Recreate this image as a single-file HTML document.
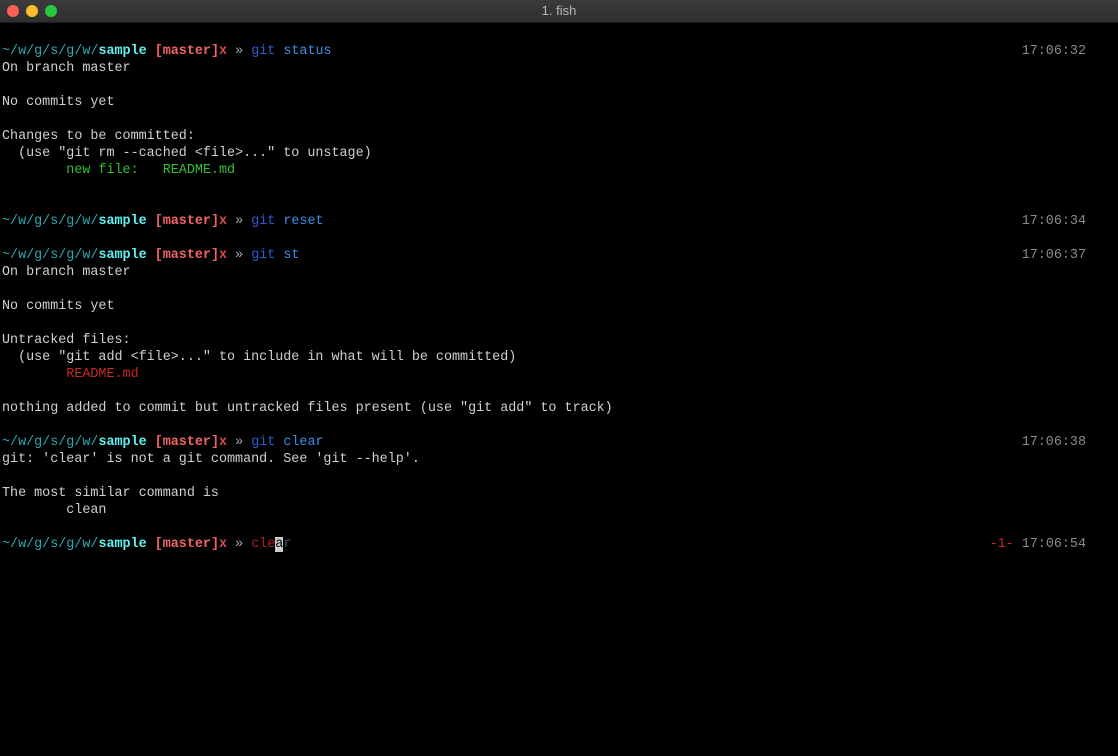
<!DOCTYPE html><html><head><style>
body{margin:0;width:1118px;height:756px;background:#000;overflow:hidden;font-family:"Liberation Mono",monospace;}
.tb{height:22px;background:linear-gradient(#3b3b3b,#2f2f2f);border-bottom:1px solid #1a1a1a;position:relative;color:#b8b8b8;font:13px "Liberation Sans",sans-serif;text-align:center;line-height:22px}
.d{position:absolute;top:5px;width:12px;height:12px;border-radius:50%}
pre{margin:0;position:absolute;top:43px;left:2px;right:32px;font-size:13.4px;line-height:17px;color:#d0d0d0;font-family:"Liberation Mono",monospace}
.l{height:17px;white-space:pre;position:relative}
.p{color:#2aa9b0}.s{color:#5ff0f0;font-weight:bold}.m{color:#f06464;font-weight:bold}.x{color:#e04848;font-weight:bold}.r{color:#aaa}
.g{color:#2a5fd0}.c{color:#3b8fe8}.gr{color:#34c034}.rd{color:#c42a20}
.t{position:absolute;right:0;top:0;color:#8a8a8a}
</style></head><body>
<div class="tb"><div class="d" style="left:7px;background:#fc5f57"></div><div class="d" style="left:26px;background:#fdbc2e"></div><div class="d" style="left:45px;background:#28c840"></div>1. fish</div>
<pre><div class="l"><span class="p">~/w/g/s/g/w/</span><span class="s">sample</span> <span class="m">[master]</span><span class="x">x</span> <span class="r">»</span> <span class="g">git</span> <span class="c">status</span><span class="t">17:06:32</span></div><div class="l">On branch master</div><div class="l"></div><div class="l">No commits yet</div><div class="l"></div><div class="l">Changes to be committed:</div><div class="l">  (use "git rm --cached &lt;file&gt;..." to unstage)</div><div class="l"><span class="gr">        new file:   README.md</span></div><div class="l"></div><div class="l"></div><div class="l"><span class="p">~/w/g/s/g/w/</span><span class="s">sample</span> <span class="m">[master]</span><span class="x">x</span> <span class="r">»</span> <span class="g">git</span> <span class="c">reset</span><span class="t">17:06:34</span></div><div class="l"></div><div class="l"><span class="p">~/w/g/s/g/w/</span><span class="s">sample</span> <span class="m">[master]</span><span class="x">x</span> <span class="r">»</span> <span class="g">git</span> <span class="c">st</span><span class="t">17:06:37</span></div><div class="l">On branch master</div><div class="l"></div><div class="l">No commits yet</div><div class="l"></div><div class="l">Untracked files:</div><div class="l">  (use "git add &lt;file&gt;..." to include in what will be committed)</div><div class="l"><span class="rd">        README.md</span></div><div class="l"></div><div class="l">nothing added to commit but untracked files present (use "git add" to track)</div><div class="l"></div><div class="l"><span class="p">~/w/g/s/g/w/</span><span class="s">sample</span> <span class="m">[master]</span><span class="x">x</span> <span class="r">»</span> <span class="g">git</span> <span class="c">clear</span><span class="t">17:06:38</span></div><div class="l">git: 'clear' is not a git command. See 'git --help'.</div><div class="l"></div><div class="l">The most similar command is</div><div class="l">        clean</div><div class="l"></div><div class="l"><span class="p">~/w/g/s/g/w/</span><span class="s">sample</span> <span class="m">[master]</span><span class="x">x</span> <span class="r">»</span> <span style="color:#b02020">cle</span><span style="background:#ccc;color:#000">a</span><span style="color:#555">r</span><span class="t"><span style="color:#c42a20">-1-</span> 17:06:54</span></div></pre>
</body></html>
